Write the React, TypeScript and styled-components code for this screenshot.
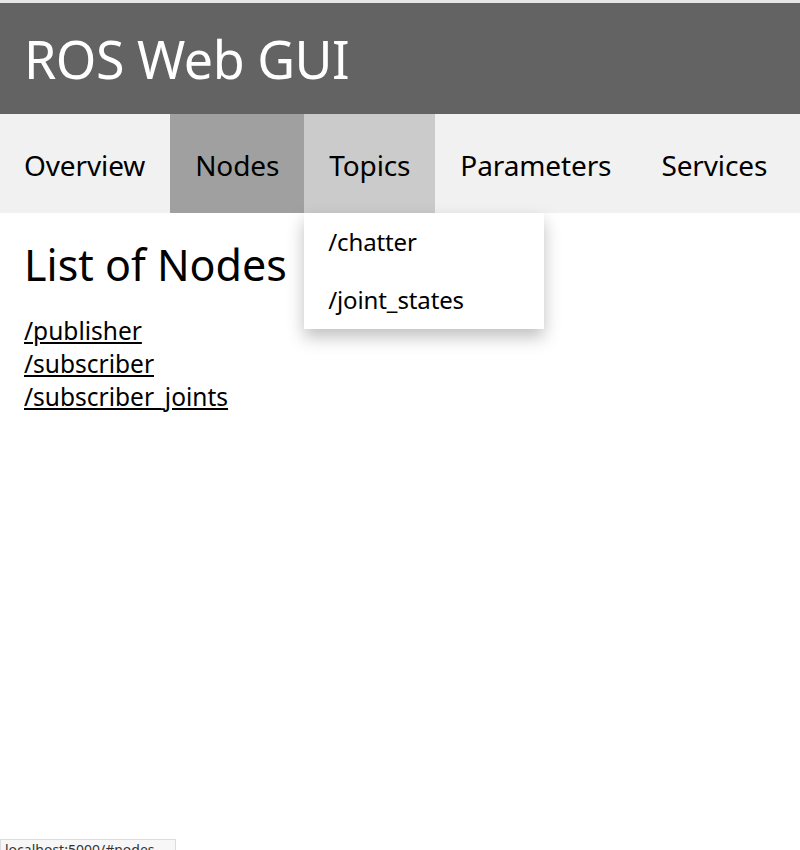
import styled, { createGlobalStyle } from 'styled-components';

const GlobalStyle = createGlobalStyle`
  html, body {
    margin: 0;
    padding: 0;
    background: #ffffff;
    font-family: "Noto Sans", "Open Sans", sans-serif;
    color: #000;
  }
  body {
    border-top: 3px solid #e6e6e6;
  }
`;

const navItems = ['Overview', 'Nodes', 'Topics', 'Parameters', 'Services'];
const topics = ['/chatter', '/joint_states'];
const nodes = ['/publisher', '/subscriber', '/subscriber_joints'];

const App = () => {
  return (
    <>
      <GlobalStyle />
      <Header>
        <Title>ROS Web GUI</Title>
      </Header>
      <Nav>
        {navItems.map((item) => (
          <NavItem key={item} $active={item === 'Nodes'} $hover={item === 'Topics'}>
            {item}
            {item === 'Topics' && (
              <Dropdown>
                {topics.map((t) => (
                  <DropdownItem key={t}>{t}</DropdownItem>
                ))}
              </Dropdown>
            )}
          </NavItem>
        ))}
      </Nav>
      <Main>
        <Heading>List of Nodes</Heading>
        <NodeList>
          {nodes.map((n) => (
            <NodeLink key={n} href="#">
              {n}
            </NodeLink>
          ))}
        </NodeList>
      </Main>
      <StatusBar>localhost:5000/#nodes</StatusBar>
    </>
  );
};
export default App;

const Header = styled.header`
  background-color: #636363;
  height: 111px;
  display: flex;
  align-items: center;
  padding: 0 24px;
`;
const Title = styled.h1`
  margin: 0;
  color: #ffffff;
  font-weight: 400;
  font-size: 52px;
  letter-spacing: -0.5px;
`;
const Nav = styled.nav`
  background-color: #f1f1f1;
  height: 99px;
  display: flex;
`;
const NavItem = styled.div<{ $active?: boolean; $hover?: boolean }>`
  position: relative;
  display: flex;
  align-items: center;
  padding: 3px 25px 0 25px;
  font-size: 28px;
  letter-spacing: -0.12px;
  background-color: ${(p) => (p.$active ? '#a0a0a0' : p.$hover ? '#cbcbcb' : 'transparent')};
  &:first-child {
    padding-left: 24px;
  }
`;
const Dropdown = styled.div`
  position: absolute;
  top: 100%;
  left: 0;
  width: 240px;
  background: #ffffff;
  box-shadow: 0 8px 16px rgba(0, 0, 0, 0.25);
  z-index: 2;
`;
const DropdownItem = styled.div`
  font-size: 24px;
  padding: 14px 24px;
  height: 30px;
  line-height: 30px;
`;
const Main = styled.main`
  padding: 24px 24px;
`;
const Heading = styled.h2`
  margin: 0 0 21px 0;
  font-weight: 400;
  font-size: 43px;
  line-height: 56px;
`;
const NodeList = styled.div`
  display: flex;
  flex-direction: column;
  align-items: flex-start;
`;
const NodeLink = styled.a`
  color: #000;
  font-size: 24.5px;
  line-height: 33px;
  text-decoration: underline;
`;
const StatusBar = styled.div`
  position: fixed;
  left: 0;
  bottom: 0;
  width: 170px;
  height: 10px;
  overflow: hidden;
  background: #f7f7f7;
  border: 1px solid #dcdcdc;
  border-bottom: none;
  font-size: 14px;
  line-height: 20px;
  color: #333;
  padding-left: 4px;
`;
